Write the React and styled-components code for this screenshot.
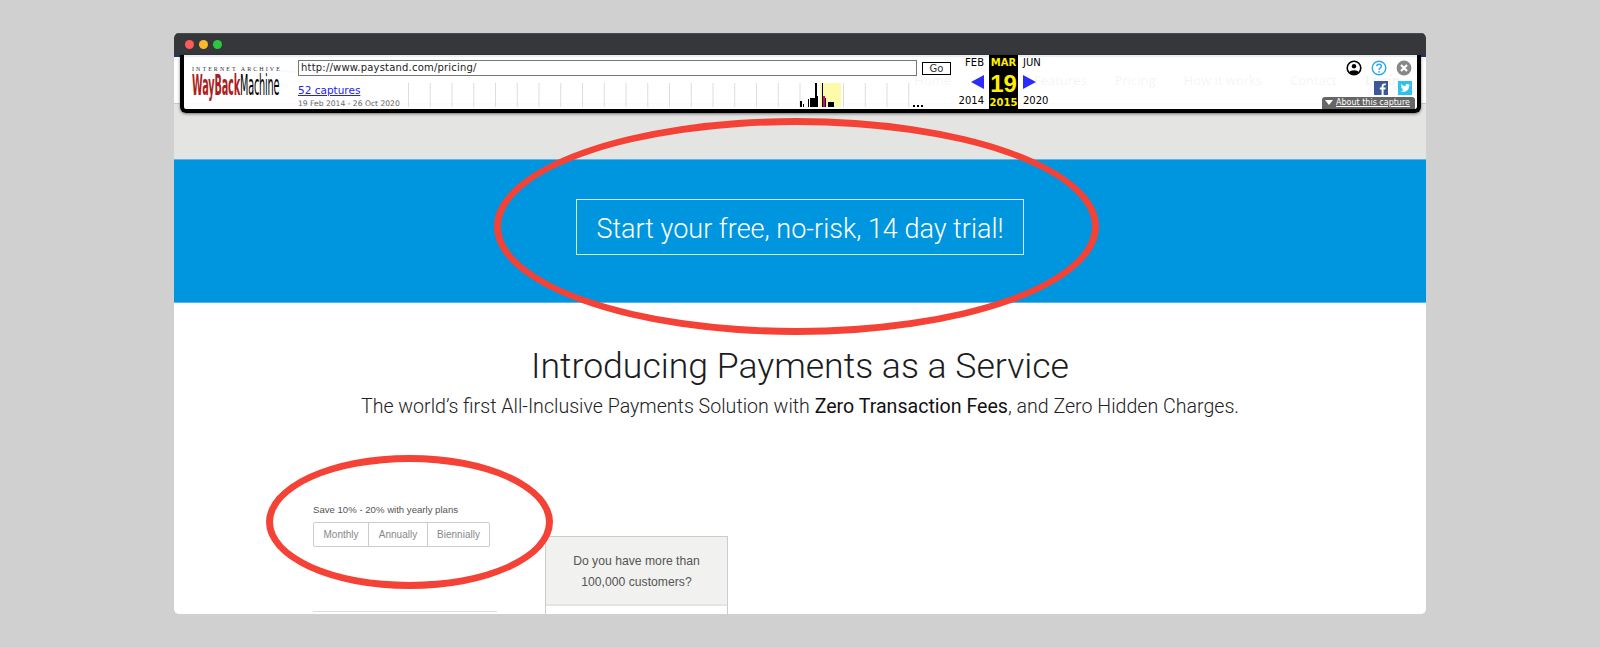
import styled, { createGlobalStyle } from "styled-components";

const Global = createGlobalStyle`
  html, body {
    margin: 0;
    height: 647px;
    overflow: hidden;
    background: #d0d0d0;
  }
`;

const Stage = styled.div`
  padding-top: 33px;
  display: flex;
  justify-content: center;
`;

const BrowserWindow = styled.div`
  position: relative;
  width: 1252px;
  height: 581px;
  border-radius: 5px;
  overflow: hidden;
  background: #fff;
  font-family: "Liberation Sans", Arial, sans-serif;
`;

const TitleBar = styled.div`
  height: 22px;
  background: #36373a;
  border-top: 1px solid #4a4b4e;
  box-sizing: border-box;
  display: flex;
  align-items: center;
  gap: 5px;
  padding-left: 11px;
`;

const Dot = styled.span`
  width: 9px;
  height: 9px;
  border-radius: 50%;
  background: ${(p) => p.$color};
`;

/* the archived page underneath the wayback bar */
const SiteHeader = styled.div`
  height: 49px;
  border-top: 2px solid #1c3a6e;
  border-bottom: 1px solid #c9c9c9;
  box-sizing: border-box;
  background: #fff;
  display: flex;
  align-items: center;
  gap: 28px;
  padding: 0 26px 0 40px;
`;

const SiteLogo = styled.svg`
  margin-right: auto;
`;

const SiteLink = styled.span`
  font-family: "Open Sans", sans-serif;
  font-size: 13px;
  font-weight: ${(p) => (p.$bold ? 700 : 400)};
  color: #8a8a8a;
  margin-right: ${(p) => (p.$wide ? 55 : 0)}px;
`;

const GrayBand = styled.div`
  height: 55px;
  background: #e4e4e2;
`;

const BlueBand = styled.section`
  height: 144px;
  background: #0096df;
  border-top: 1px solid #5cb5e8;
  border-bottom: 1px solid #5cb5e8;
  box-sizing: border-box;
  display: flex;
  align-items: center;
  justify-content: center;
`;

const TrialButton = styled.a`
  width: 448px;
  height: 56px;
  margin-bottom: 8px;
  padding-top: 3px;
  box-sizing: border-box;
  border: 1px solid #cfe9f8;
  color: #fff;
  font-family: "Roboto", sans-serif;
  font-weight: 300;
  font-size: 27px;
  display: flex;
  align-items: center;
  justify-content: center;
`;

const Intro = styled.section`
  text-align: center;
  padding-top: 40px;
`;

const Heading = styled.h1`
  margin: 0;
  font-family: "Roboto", sans-serif;
  font-weight: 300;
  font-size: 35.6px;
  line-height: 46px;
  color: #1c1c1c;
`;

const Sub = styled.p`
  margin: 5px 0 0;
  font-family: "Roboto", sans-serif;
  font-weight: 300;
  font-size: 19.6px;
  line-height: 26px;
  color: #222;

  strong {
    font-weight: 400;
    color: #111;
  }
`;

const PlansRow = styled.div`
  display: flex;
  align-items: flex-start;
  padding: 0 0 0 139px;
`;

const BillingColumn = styled.div`
  width: 232px;
  padding-top: 83px;
`;

const SaveNote = styled.div`
  font-size: 9.6px;
  line-height: 14px;
  color: #555;
  margin-bottom: 5px;
`;

const Segments = styled.div`
  display: inline-flex;
  height: 23px;
  border: 1px solid #ccc;
  border-radius: 2px;
`;

const Segment = styled.span`
  width: ${(p) => p.$w}px;
  display: flex;
  align-items: center;
  justify-content: center;
  font-size: 10px;
  color: #888;
  & + & {
    border-left: 1px solid #ccc;
  }
`;

const PlanCard = styled.div`
  width: 184px;
  height: 20px;
  margin-top: 64px;
  border-top: 1px solid #ddd;
`;

const QuestionCard = styled.div`
  width: 183px;
  margin-top: 116px;
  border: 1px solid #ccc;
  box-sizing: border-box;
  height: 120px;
`;

const QuestionHead = styled.div`
  height: 69px;
  background: #f1f1f0;
  border-bottom: 2px solid #e4e4e4;
  box-sizing: border-box;
  padding-top: 14px;
  text-align: center;
  font-size: 12.2px;
  line-height: 21px;
  color: #555;
`;

/* wayback toolbar */
const Wayback = styled.div`
  position: absolute;
  top: 22px;
  left: 6px;
  width: 1241px;
  height: 58px;
  box-sizing: border-box;
  border: solid #000;
  border-width: 0 4px 4px;
  border-radius: 0 0 6px 6px;
  box-shadow: 0 1px 3px rgba(0, 0, 0, 0.5);
  background: rgba(255, 255, 255, 0.91);
  display: grid;
  grid-template-columns: 114px 659px 69px 1fr;
  font-family: "DejaVu Sans", sans-serif;
  color: #000;
`;

const LogoBlock = styled.div`
  padding: 10px 0 0 8px;
`;

const ArchiveLine = styled.div`
  font-family: "Liberation Serif", serif;
  font-size: 6px;
  letter-spacing: 2.05px;
  color: #333;
  white-space: nowrap;
  line-height: 8px;
`;

const LogoWord = styled.div`
  font-size: 28px;
  line-height: 26px;
  font-weight: 700;
  white-space: nowrap;
  transform: scaleX(0.347);
  transform-origin: left top;
  letter-spacing: -0.5px;
  span:first-child {
    color: #ab1f24;
  }
  span:last-child {
    font-weight: 400;
    color: #000;
  }
`;

const Middle = styled.div`
  display: flex;
  flex-direction: column;
`;

const UrlRow = styled.div`
  display: flex;
  align-items: center;
  gap: 5px;
  padding-top: 5px;
  height: 16px;
`;

const UrlInput = styled.div`
  width: 619px;
  height: 16px;
  box-sizing: border-box;
  border: 1px solid #777;
  background: #fff;
  font-size: 10px;
  letter-spacing: 0.2px;
  line-height: 14px;
  padding-left: 2px;
  color: #222;
`;

const GoButton = styled.div`
  width: 29px;
  height: 13px;
  box-sizing: border-box;
  border: 1px solid #000;
  font-size: 10px;
  line-height: 11px;
  text-align: center;
  color: #333;
`;

const CaptureRow = styled.div`
  display: flex;
  padding-top: 7px;
`;

const CaptureInfo = styled.div`
  width: 110px;
  flex: none;
`;

const CaptureLink = styled.a`
  display: block;
  font-size: 10.5px;
  line-height: 15px;
  color: #2222ee;
  text-decoration: underline;
`;

const CaptureDates = styled.div`
  font-size: 7.6px;
  line-height: 11px;
  color: #666;
  white-space: nowrap;
`;

const DateGrid = styled.div`
  display: grid;
  grid-template-columns: 1fr 29px 1fr;
  margin-left: -2px;
  width: 97px;
  font-size: 10px;
  text-align: center;
`;

const Current = styled.div`
  background: #000;
  color: #ffef00;
  font-weight: 700;
  display: flex;
  flex-direction: column;
  align-items: center;
  height: 54px;
`;

const CurMonth = styled.div`
  font-size: 10px;
  line-height: 15px;
`;

const CurDay = styled.div`
  font-family: "Liberation Sans", sans-serif;
  font-size: 24px;
  line-height: 27px;
`;

const CurYear = styled.div`
  font-size: 10px;
  line-height: 12px;
`;

const Side = styled.div`
  display: flex;
  flex-direction: column;
  justify-content: space-between;
  height: 54px;
  line-height: 12px;
  align-items: ${(p) => (p.$left ? "flex-start" : "flex-end")};
  padding: 0 ${(p) => (p.$left ? 0 : 5)}px 0 ${(p) => (p.$left ? 5 : 0)}px;
  box-sizing: border-box;
  span:first-child {
    padding-top: 2px;
  }
  span:last-child {
    padding-bottom: 2px;
  }
`;

const ToolIcons = styled.div`
  display: flex;
  flex-direction: column;
  align-items: flex-end;
  gap: 5px;
  padding: 5px 5px 0 0;
`;

const IconRow = styled.div`
  display: flex;
  gap: ${(p) => p.$gap}px;
`;

const AboutTab = styled.div`
  position: absolute;
  right: 2px;
  bottom: 0;
  height: 12px;
  width: 93px;
  box-sizing: border-box;
  background: #666;
  border-radius: 3px 3px 0 0;
  color: #fff;
  font-size: 8px;
  line-height: 12px;
  padding-left: 14px;
  text-decoration: underline;
  white-space: nowrap;

  &::before {
    content: "";
    position: absolute;
    left: 3px;
    top: 3px;
    border: 4px solid transparent;
    border-top: 5px solid #fff;
    border-bottom: 0;
  }
`;

const Ring = styled.div`
  position: absolute;
  left: ${(p) => p.$x}px;
  top: ${(p) => p.$y}px;
  width: ${(p) => p.$w}px;
  height: ${(p) => p.$h}px;
  box-sizing: border-box;
  border: 7px solid #f44336;
  border-radius: 50%;
`;

function Spark() {
  const ticks = [];
  for (let i = 0; i < 25; i++) ticks.push(i * 21.75 + 0.5);
  const bars = [
    [392, 2, 6], [395, 1, 3], [400, 1, 8], [402, 7, 9], [407, 2, 24], [409, 1, 11],
    [414, 1, 24], [416, 2, 9], [420, 3, 5], [423, 3, 5],
  ];
  return (
    <svg width="520" height="24" viewBox="0 0 520 24" style={{ display: "block" }}>
      {ticks.map((t) => (
        <line key={t} x1={t} x2={t} y1="0" y2="24" stroke="#ddd" />
      ))}
      <rect x="412" y="0" width="21" height="24" fill="#fdfaa9" />
      {bars.map(([x, w, h]) => (
        <rect key={x} x={x} y={24 - h} width={w} height={h} fill="#000" />
      ))}
      <rect x="415" y="13" width="2" height="11" fill="#e6007e" />
      <rect x="505" y="22" width="2" height="2" fill="#000" />
      <rect x="509" y="22" width="2" height="2" fill="#000" />
      <rect x="513" y="22" width="2" height="2" fill="#000" />
    </svg>
  );
}

function Arrow({ flip }) {
  return (
    <svg width="13" height="14" viewBox="0 0 13 14" style={{ transform: flip ? "scaleX(-1)" : "none" }}>
      <path d="M0 7 L13 0 V14 Z" fill="#2b2bff" />
    </svg>
  );
}

function PersonIcon() {
  return (
    <svg width="16" height="16" viewBox="0 0 16 16">
      <circle cx="8" cy="8" r="6.8" fill="#fff" stroke="#000" strokeWidth="1.6" />
      <circle cx="8" cy="6.2" r="2.2" fill="#000" />
      <path d="M3.2 12.5 C4 9.6 12 9.6 12.8 12.5 A6.8 6.8 0 0 1 3.2 12.5Z" fill="#000" />
    </svg>
  );
}

function HelpIcon() {
  return (
    <svg width="16" height="16" viewBox="0 0 16 16">
      <circle cx="8" cy="8" r="6.8" fill="#fff" stroke="#2da8ee" strokeWidth="1.4" />
      <path d="M5.7 6.2 C5.8 3.6 10.4 3.6 10.4 6.2 C10.4 8 8 7.8 8 9.8" fill="none" stroke="#2da8ee" strokeWidth="1.4" />
      <circle cx="8" cy="11.8" r="0.9" fill="#2da8ee" />
    </svg>
  );
}

function CloseIcon() {
  return (
    <svg width="16" height="16" viewBox="0 0 16 16">
      <circle cx="8" cy="8" r="7.4" fill="#888" />
      <path d="M5 5 L11 11 M11 5 L5 11" stroke="#fff" strokeWidth="2.2" />
    </svg>
  );
}

function FacebookIcon() {
  return (
    <svg width="14" height="14" viewBox="0 0 14 14">
      <rect width="14" height="14" fill="#3b5998" />
      <path d="M9.6 14 V8.6 H11.4 L11.7 6.6 H9.6 V5.3 C9.6 4.7 9.8 4.3 10.6 4.3 H11.8 V2.5 C11.4 2.4 10.9 2.4 10.3 2.4 C8.7 2.4 7.6 3.3 7.6 5.1 V6.6 H5.8 V8.6 H7.6 V14 Z" fill="#fff" />
    </svg>
  );
}

function TwitterIcon() {
  return (
    <svg width="14" height="14" viewBox="0 0 14 14">
      <rect width="14" height="14" fill="#2fc2ef" />
      <path d="M12 3.9 C11.6 4.1 11.2 4.2 10.8 4.2 C11.2 4 11.6 3.6 11.7 3.1 C11.3 3.3 10.9 3.5 10.4 3.6 C9.3 2.5 7.2 3.4 7.6 5.3 C5.9 5.2 4.4 4.4 3.4 3.1 C2.9 4 3.1 5.2 4 5.8 C3.7 5.8 3.4 5.7 3.1 5.6 C3.1 6.6 3.8 7.4 4.7 7.6 C4.4 7.7 4.1 7.7 3.8 7.6 C4.1 8.4 4.8 9 5.7 9 C4.8 9.7 3.7 10 2.6 9.9 C7 12.3 11.3 9.3 11.1 5 C11.5 4.7 11.8 4.3 12 3.9 Z" fill="#fff" />
    </svg>
  );
}

export default function App() {
  return (
    <>
      <Global />
      <Stage>
        <BrowserWindow>
          <TitleBar>
            <Dot $color="#fc5b57" />
            <Dot $color="#fdb82e" />
            <Dot $color="#2ac83f" />
          </TitleBar>
          <SiteHeader>
            <SiteLogo width="90" height="30" viewBox="0 0 90 30">
              <path d="M3 24 C20 6 50 2 86 8 M30 24 C45 16 60 16 74 22" fill="none" stroke="#a9c4dc" strokeWidth="2" />
            </SiteLogo>
            <SiteLink $wide>Home</SiteLink>
            <SiteLink>Features</SiteLink>
            <SiteLink>Pricing</SiteLink>
            <SiteLink>How it works</SiteLink>
            <SiteLink>Contact</SiteLink>
            <SiteLink $bold>Login</SiteLink>
          </SiteHeader>
          <GrayBand />
          <BlueBand>
            <TrialButton>Start your free, no-risk, 14 day trial!</TrialButton>
          </BlueBand>
          <Intro>
            <Heading>Introducing Payments as a Service</Heading>
            <Sub>
              The world’s first All-Inclusive Payments Solution with <strong>Zero Transaction Fees</strong>, and Zero Hidden Charges.
            </Sub>
          </Intro>
          <PlansRow>
            <BillingColumn>
              <SaveNote>Save 10% - 20% with yearly plans</SaveNote>
              <Segments>
                <Segment $w={54}>Monthly</Segment>
                <Segment $w={58}>Annually</Segment>
                <Segment $w={61}>Biennially</Segment>
              </Segments>
              <PlanCard />
            </BillingColumn>
            <QuestionCard>
              <QuestionHead>
                Do you have more than
                <br />
                100,000 customers?
              </QuestionHead>
            </QuestionCard>
          </PlansRow>

          <Wayback>
            <LogoBlock>
              <ArchiveLine>INTERNET ARCHIVE</ArchiveLine>
              <LogoWord>
                <span>WayBack</span>
                <span>Machine</span>
              </LogoWord>
            </LogoBlock>
            <Middle>
              <UrlRow>
                <UrlInput>http://www.paystand.com/pricing/</UrlInput>
                <GoButton>Go</GoButton>
              </UrlRow>
              <CaptureRow>
                <CaptureInfo>
                  <CaptureLink>52 captures</CaptureLink>
                  <CaptureDates>19 Feb 2014 - 26 Oct 2020</CaptureDates>
                </CaptureInfo>
                <Spark />
              </CaptureRow>
            </Middle>
            <DateGrid>
              <Side>
                <span>FEB</span>
                <Arrow />
                <span>2014</span>
              </Side>
              <Current>
                <CurMonth>MAR</CurMonth>
                <CurDay>19</CurDay>
                <CurYear>2015</CurYear>
              </Current>
              <Side $left>
                <span>JUN</span>
                <Arrow flip />
                <span>2020</span>
              </Side>
            </DateGrid>
            <ToolIcons>
              <IconRow $gap={9}>
                <PersonIcon />
                <HelpIcon />
                <CloseIcon />
              </IconRow>
              <IconRow $gap={10}>
                <FacebookIcon />
                <TwitterIcon />
              </IconRow>
            </ToolIcons>
            <AboutTab>About this capture</AboutTab>
          </Wayback>

          <Ring $x={320} $y={85} $w={605} $h={217} />
          <Ring $x={92} $y={422} $w={287} $h={134} />
        </BrowserWindow>
      </Stage>
    </>
  );
}
